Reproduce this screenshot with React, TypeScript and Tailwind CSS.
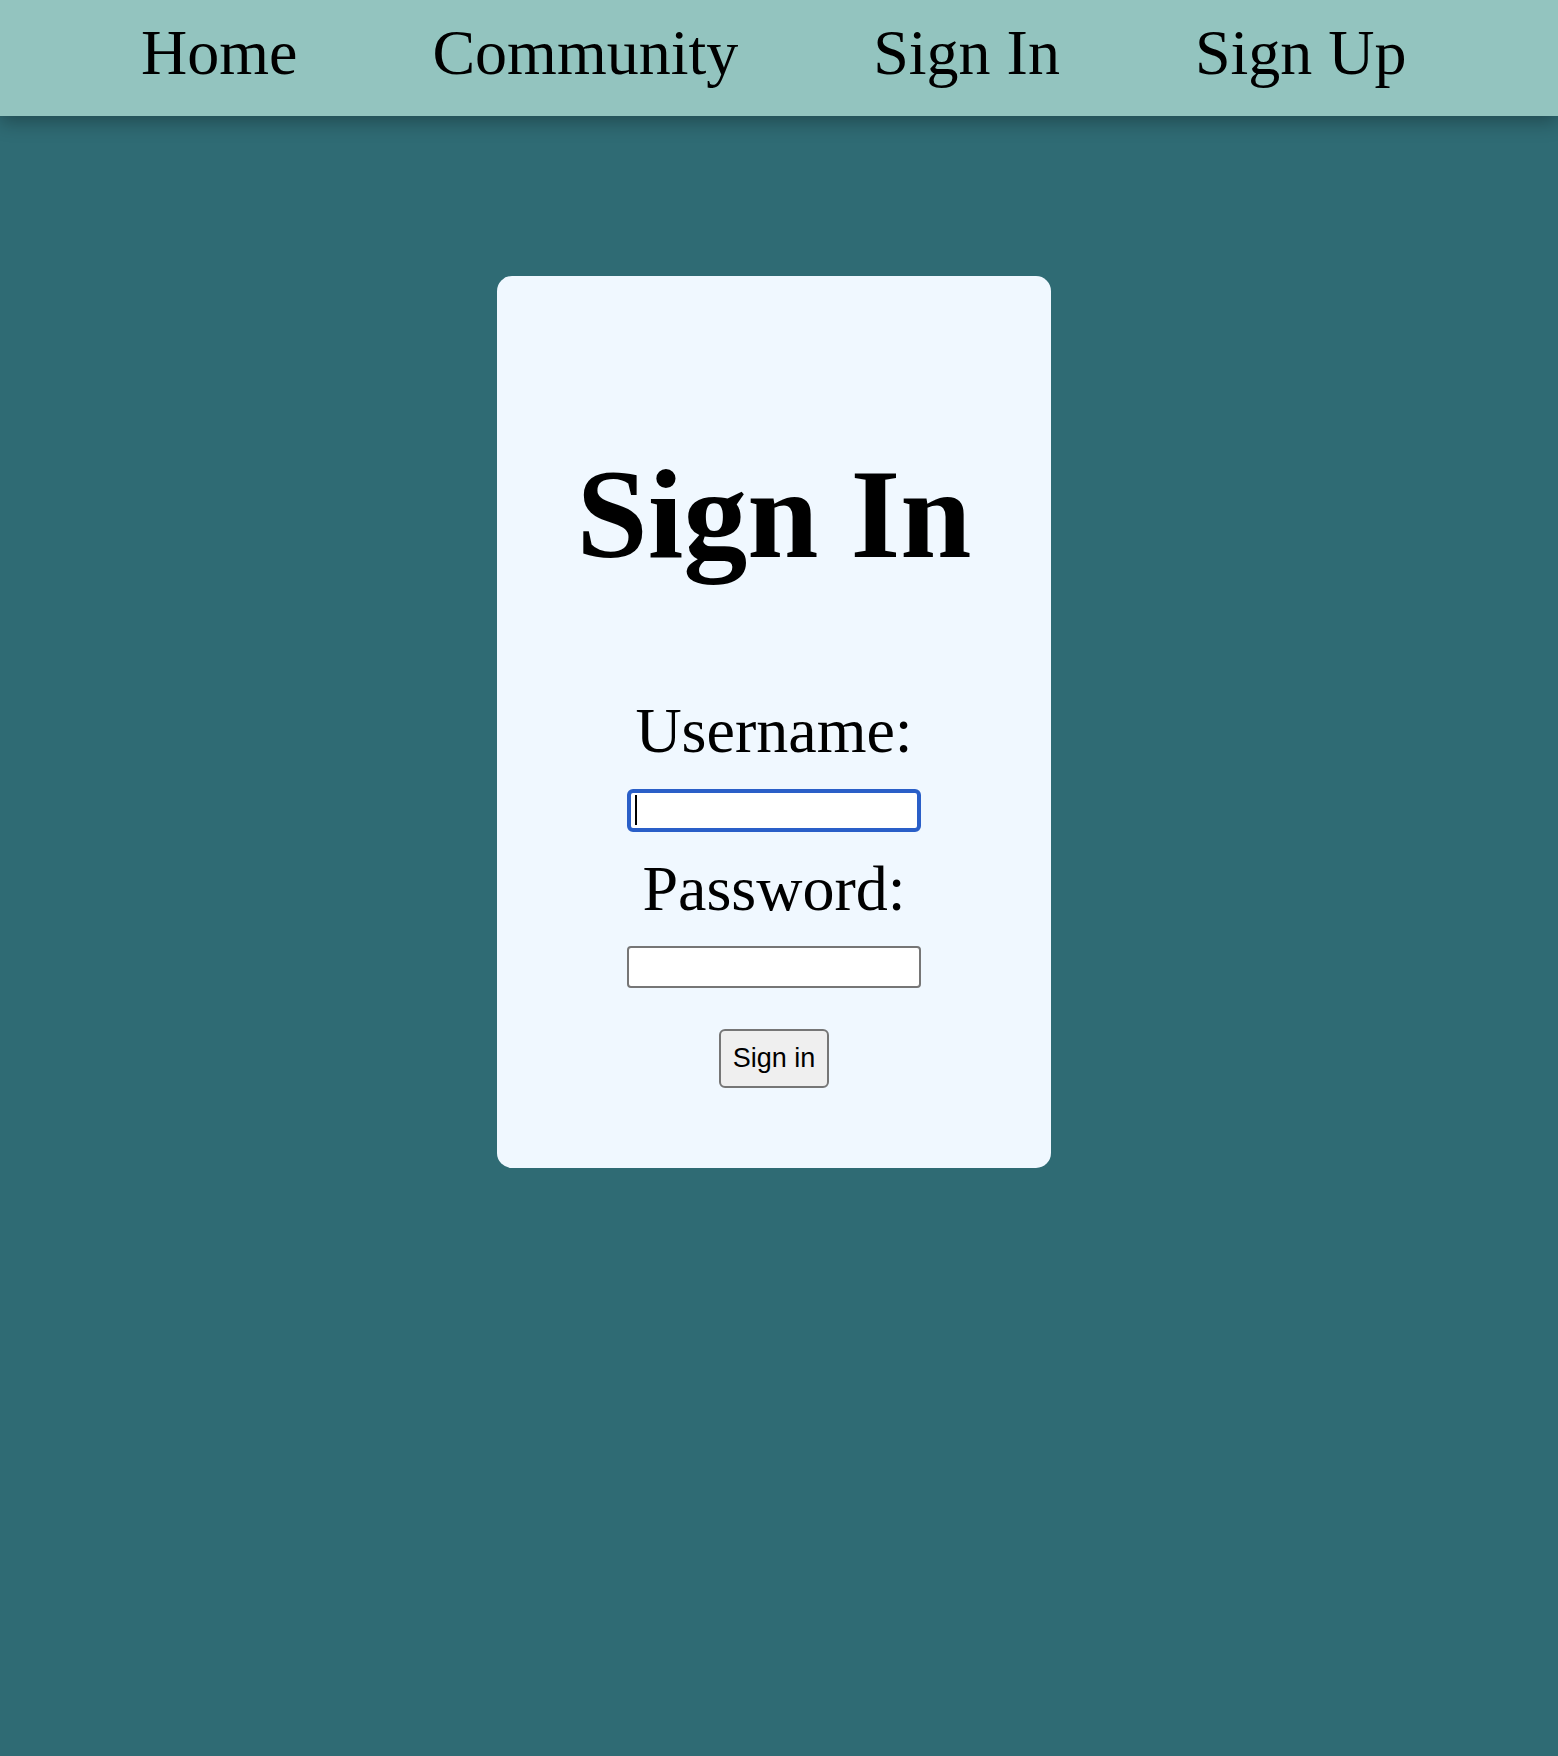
export default function App() {
  const links = ['Home', 'Community', 'Sign In', 'Sign Up'];

  return (
    <div className="min-h-screen bg-[#2f6b74] font-['Liberation_Serif','Times_New_Roman',serif] text-black">
      {/* Top nav */}
      <nav className="relative z-10 h-[116px] bg-[#93c4bf] shadow-[0_6px_18px_rgba(0,0,0,0.3)]">
        <ul className="flex pl-[141px] pt-[21px] gap-[135px]">
          {links.map((link) => (
            <li key={link}>
              <a href="#" className="text-[64px] leading-none">
                {link}
              </a>
            </li>
          ))}
        </ul>
      </nav>

      {/* Sign in card */}
      <main className="flex justify-center pr-[10px] pt-[160px]">
        <div className="w-[554px] rounded-[15px] bg-[#f0f8ff] pt-[174px] pb-[80px] flex flex-col items-center">
          <h1 className="text-[128px] font-bold leading-none">Sign In</h1>

          <label className="mt-[121px] text-[64px] leading-none">Username:</label>
          <div className="relative mt-[26px] h-[43px] w-[294px] rounded-[6px] border-[4px] border-[#2a5fc8] bg-white">
            <span className="absolute left-[4px] top-[2px] h-[30px] w-[2px] bg-black" />
          </div>

          <label className="mt-[25px] text-[64px] leading-none">Password:</label>
          <input
            type="password"
            className="mt-[25px] h-[42px] w-[294px] rounded-[4px] border-2 border-[#767676] bg-white outline-none"
          />

          <button className="mt-[41px] h-[59px] w-[110px] rounded-[6px] border-2 border-[#767676] bg-[#efefef] font-['Liberation_Sans',Arial,sans-serif] text-[27px]">
            Sign in
          </button>
        </div>
      </main>
    </div>
  );
}
